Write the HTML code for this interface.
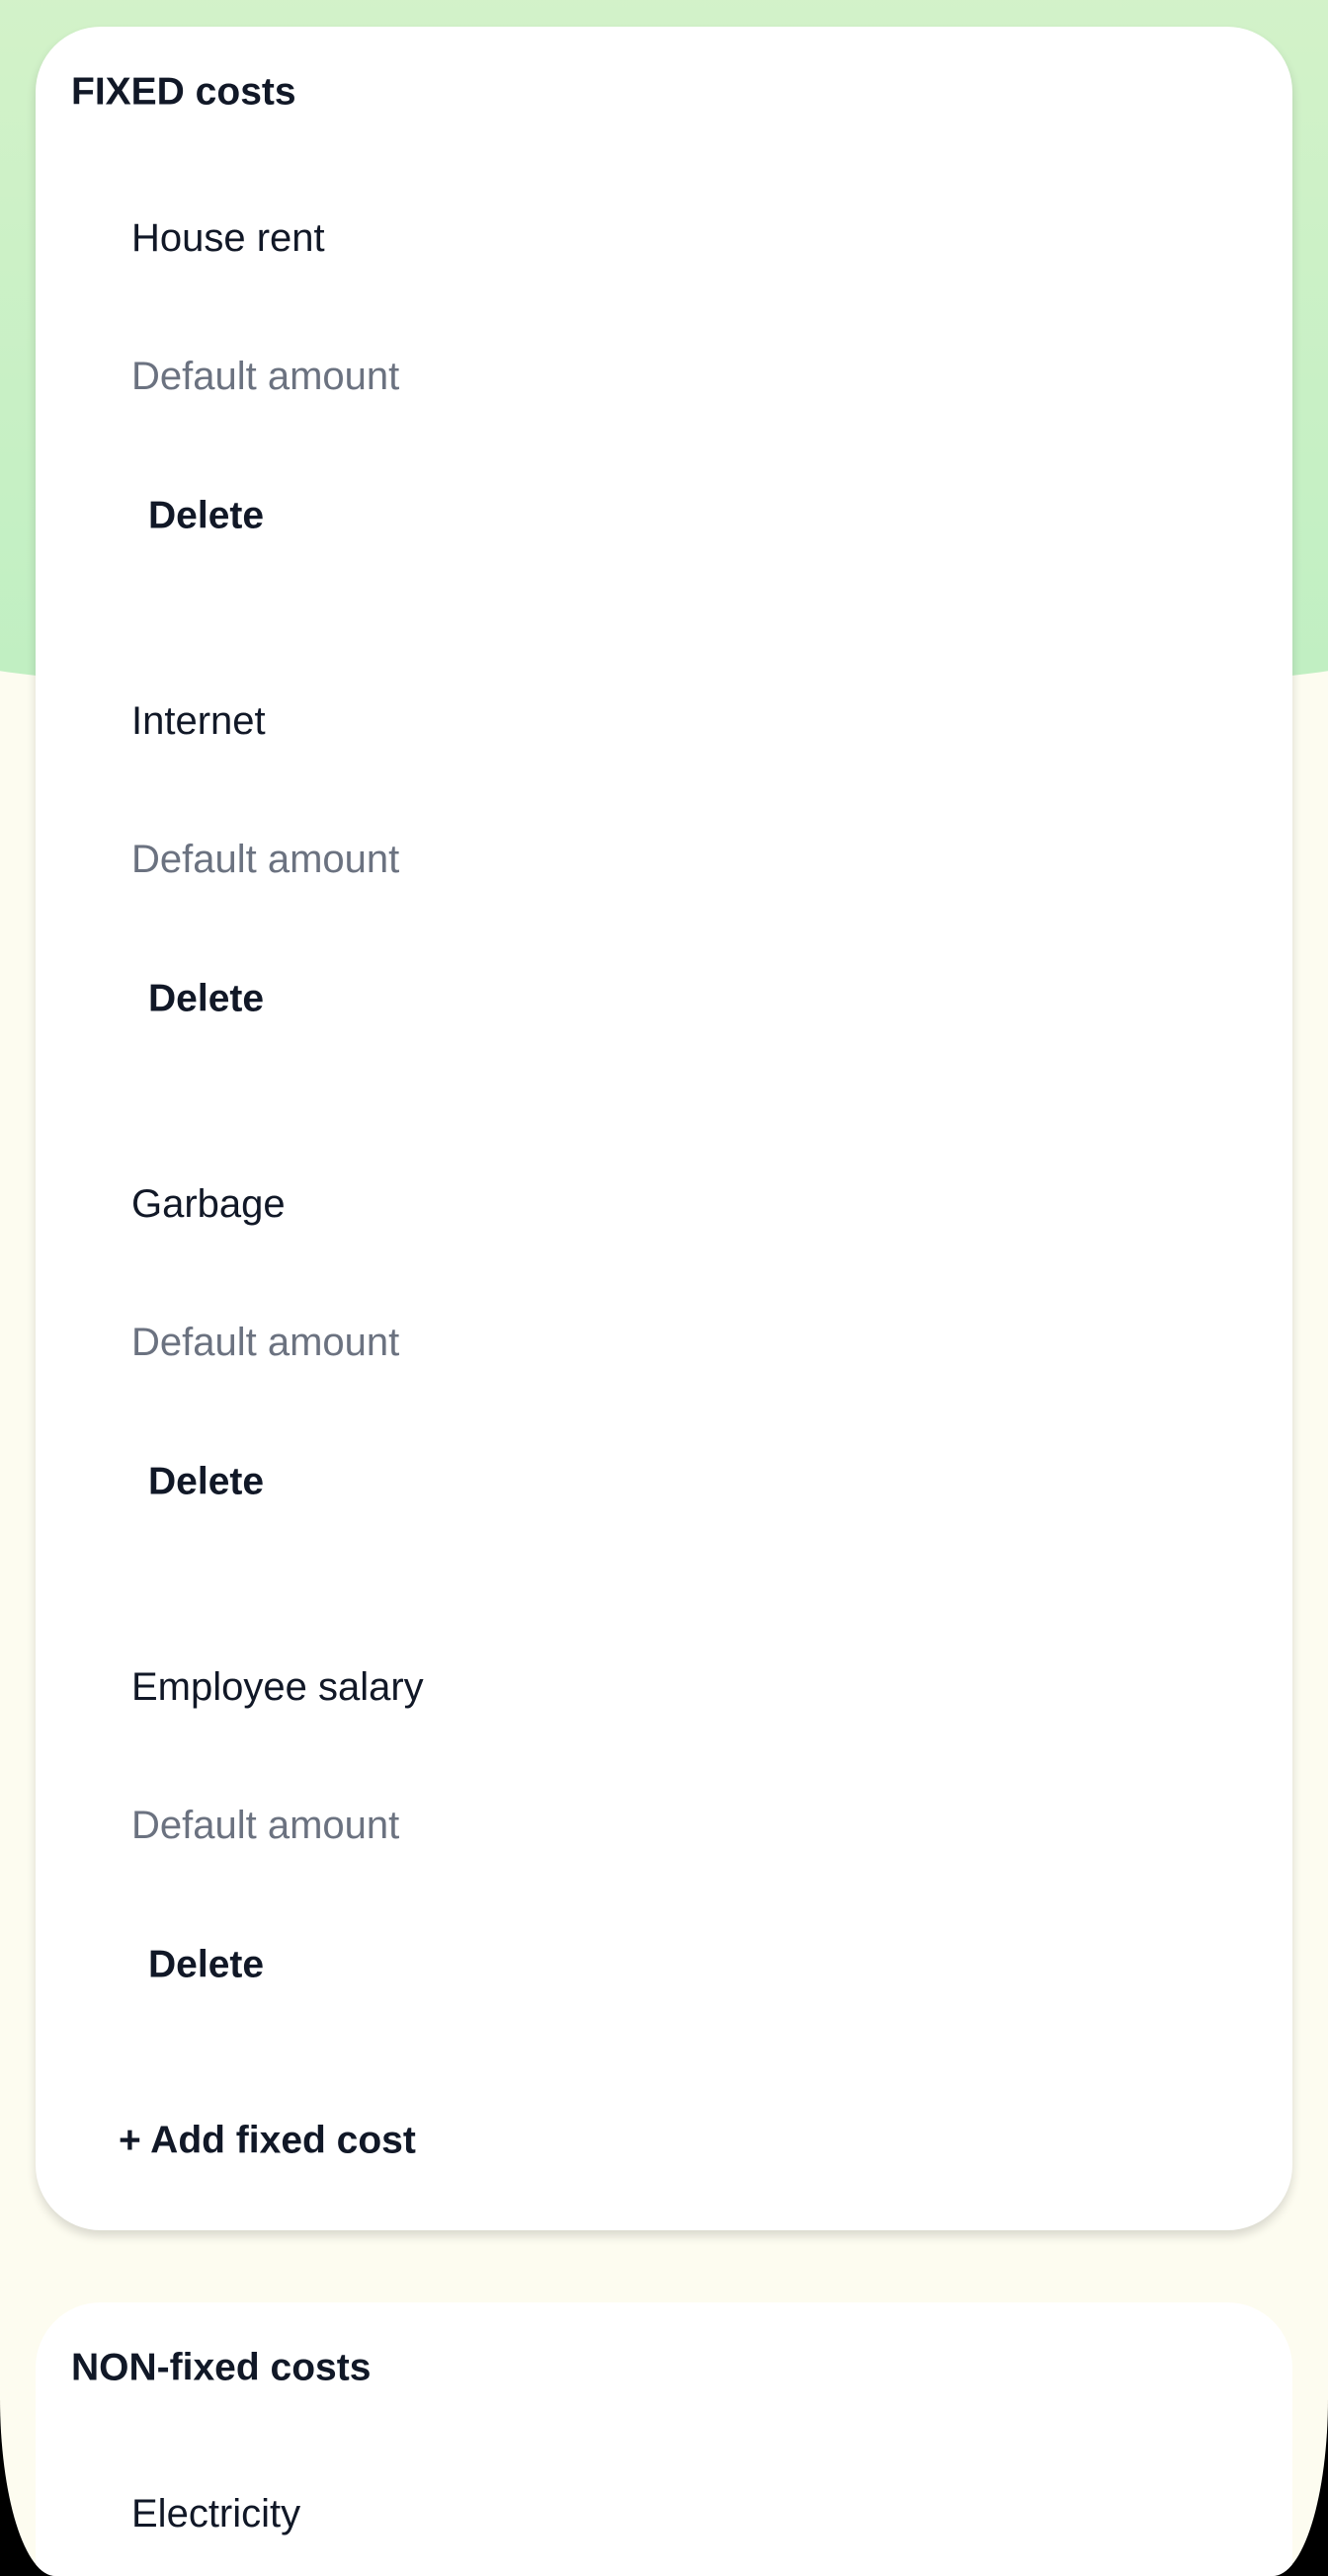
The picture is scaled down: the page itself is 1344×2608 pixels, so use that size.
<!DOCTYPE html>
<html><head><meta charset="utf-8"><style>
*{margin:0;padding:0;box-sizing:border-box}
html,body{width:1344px;height:2608px;overflow:hidden;background:#000}
#screen{position:absolute;left:0;top:0;width:1344px;height:2608px;background:#fdfcf0;overflow:hidden;border-bottom-left-radius:56px 180px;border-bottom-right-radius:56px 180px}
#green{position:absolute;left:-40px;top:-10px;width:1424px;height:716px;background:linear-gradient(#d3f2c9,#c0efc2);border-bottom-left-radius:50% 40px;border-bottom-right-radius:50% 40px}
.card{position:absolute;left:36px;width:1272px;background:#fff;border-radius:66px;box-shadow:0 6px 10px rgba(0,0,0,0.14)}
.t{position:absolute;font-family:"Liberation Sans",sans-serif;color:#111827;white-space:nowrap;line-height:1;transform:translateY(-50%)}
.h{font-weight:bold;font-size:39px;left:36px}
.l{font-size:40px;left:97px}
.d{font-size:40px;left:97px;color:#6b7280}
.b{font-weight:bold;font-size:39px;left:114px}
</style></head><body>
<div id="screen">
<div id="green"></div>
<div class="card" style="top:27px;height:2231px">
  <div class="t h" style="top:66px">FIXED costs</div>
  <div class="t l" style="top:214px">House rent</div>
  <div class="t d" style="top:354px">Default amount</div>
  <div class="t b" style="top:495px">Delete</div>
  <div class="t l" style="top:703px">Internet</div>
  <div class="t d" style="top:843px">Default amount</div>
  <div class="t b" style="top:984px">Delete</div>
  <div class="t l" style="top:1192px">Garbage</div>
  <div class="t d" style="top:1332px">Default amount</div>
  <div class="t b" style="top:1473px">Delete</div>
  <div class="t l" style="top:1681px">Employee salary</div>
  <div class="t d" style="top:1821px">Default amount</div>
  <div class="t b" style="top:1962px">Delete</div>
  <div class="t b" style="top:2140px;left:84px">+ Add fixed cost</div>
</div>
<div class="card" style="top:2331px;height:400px;box-shadow:none">
  <div class="t h" style="top:66px">NON-fixed costs</div>
  <div class="t l" style="top:214px">Electricity</div>
</div>
</div>
</body></html>
